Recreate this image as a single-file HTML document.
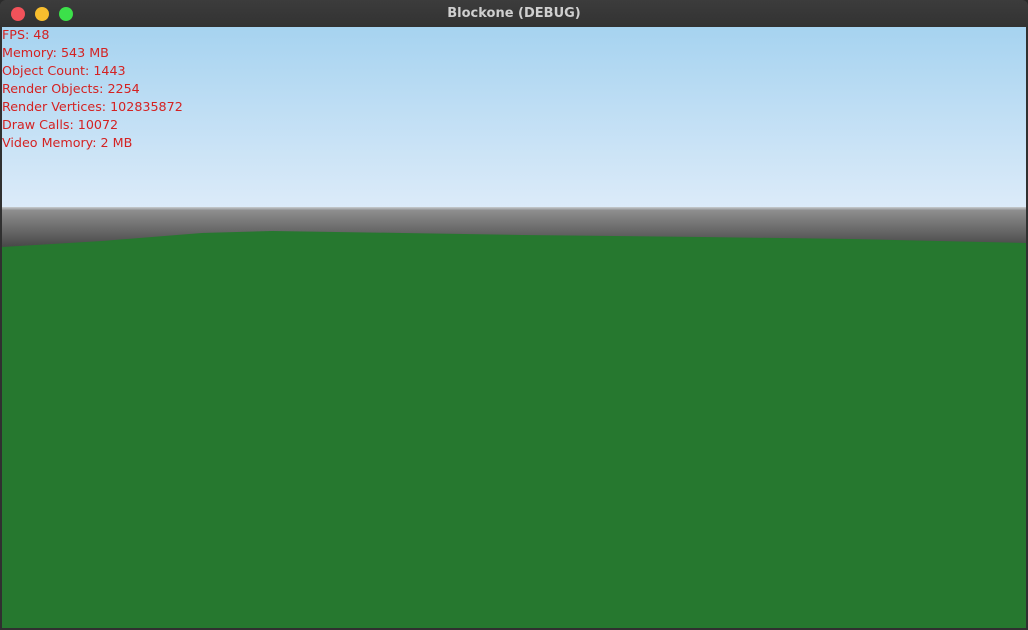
<!DOCTYPE html>
<html><head><style>
html,body{margin:0;padding:0;width:1028px;height:630px;overflow:hidden;background:#2b2b2b}
.win{position:absolute;left:0;top:0;width:1028px;height:630px;border-radius:6px 6px 0 0;overflow:hidden;background:#303030}
.title{position:absolute;left:0;top:0;width:1028px;height:27px;background:linear-gradient(#3c3c3c,#323232);color:#cfcfcf;font:bold 13px "DejaVu Sans","Liberation Sans",sans-serif;text-align:center;line-height:27px}
.dot{position:absolute;top:7px;width:14px;height:14px;border-radius:50%}
.view{position:absolute;left:2px;top:27px;width:1024px;height:601px;overflow:hidden}
.txt{position:absolute;left:0px;top:-1px;color:#d42222;font:12.7px "DejaVu Sans","Liberation Sans",sans-serif;line-height:18px;white-space:pre}
</style></head><body>
<div class="win">
<div class="title">Blockone (DEBUG)
<div class="dot" style="left:11px;background:#f2525a"></div>
<div class="dot" style="left:35px;background:#f8be2e"></div>
<div class="dot" style="left:59px;background:#3ce04a"></div>
</div>
<div class="view">
<svg width="1024" height="601" style="position:absolute;left:0;top:0">
<defs>
<linearGradient id="sky" x1="0" y1="0" x2="0" y2="1"><stop offset="0" stop-color="#a6d3f0"/><stop offset="1" stop-color="#dcebf9"/></linearGradient>
<linearGradient id="gr" x1="0" y1="0" x2="0" y2="1"><stop offset="0" stop-color="#c8ccd0"/><stop offset="0.08" stop-color="#8e8e8e"/><stop offset="1" stop-color="#444"/></linearGradient>
</defs>
<rect x="0" y="0" width="1024" height="181" fill="url(#sky)"/>
<rect x="0" y="180" width="1024" height="42" fill="url(#gr)"/>
<path d="M0 220 L100 214 L200 206 L270 204 L400 206 L520 208 L700 210 L850 212 L1024 216 L1024 601 L0 601 Z" fill="#26782f"/>
</svg>
<div class="txt">FPS: 48
Memory: 543 MB
Object Count: 1443
Render Objects: 2254
Render Vertices: 102835872
Draw Calls: 10072
Video Memory: 2 MB</div>
</div>
</div>
</body></html>
